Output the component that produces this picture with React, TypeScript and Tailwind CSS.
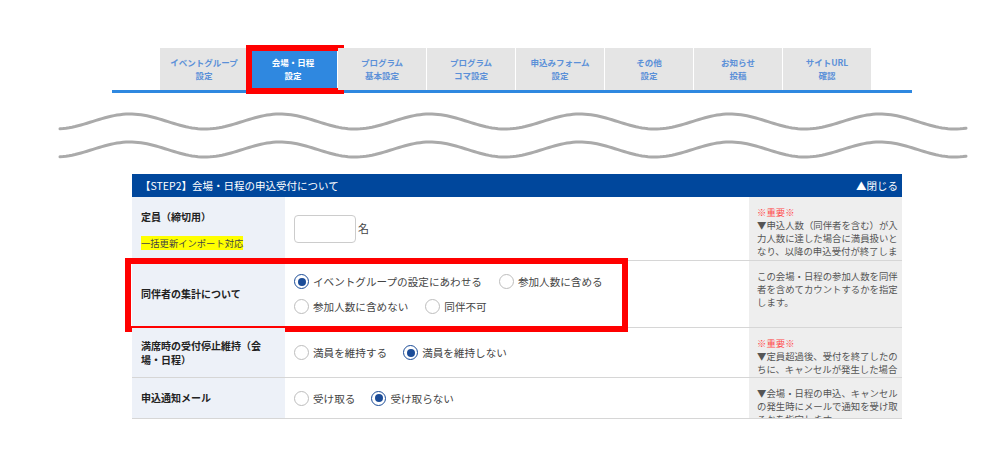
import type { ReactNode } from "react";

const TABS: { label: [string, string]; active?: boolean }[] = [
  { label: ["イベントグループ", "設定"] },
  { label: ["会場・日程", "設定"], active: true },
  { label: ["プログラム", "基本設定"] },
  { label: ["プログラム", "コマ設定"] },
  { label: ["申込みフォーム", "設定"] },
  { label: ["その他", "設定"] },
  { label: ["お知らせ", "投稿"] },
  { label: ["サイトURL", "確認"] },
];

const FONT = {
  fontFamily: '"Noto Sans CJK JP", "Noto Sans", sans-serif',
};

// sine wave path across the page
function wavePath(cy: number) {
  const pts: string[] = [];
  for (let x = 60; x <= 967; x += 3) {
    const y = cy - 7.5 * Math.cos((2 * Math.PI * (x - 130)) / 150);
    pts.push(`${x},${y.toFixed(2)}`);
  }
  return "M" + pts.join(" L");
}

function Radio({ checked, label }: { checked?: boolean; label: string }) {
  return (
    <label className="flex items-center gap-[4px]">
      {checked ? (
        <span className="w-[15px] h-[15px] rounded-full border-[1.5px] border-[#1b4c98] flex items-center justify-center bg-white">
          <span className="w-[8px] h-[8px] rounded-full bg-[#1b4c98]" />
        </span>
      ) : (
        <span className="w-[15px] h-[15px] rounded-full border-[1.5px] border-[#bdbdbd] bg-white" />
      )}
      <span className="text-[10.6px] text-[#444] leading-[15px]">{label}</span>
    </label>
  );
}

function Note({ lines, important }: { lines: string[]; important?: boolean }) {
  return (
    <div className="w-[153px] bg-[#eeeeee] pl-[8px] pt-[9px] overflow-hidden text-[9.4px] leading-[13px] text-[#555]">
      {important && <div className="text-[#ff4b4b] whitespace-nowrap">※重要※</div>}
      {lines.map((l, i) => (
        <div key={i} className="whitespace-nowrap">
          {l}
        </div>
      ))}
    </div>
  );
}

function Row({
  height,
  label,
  children,
  note,
  overlay,
}: {
  height: string;
  label: ReactNode;
  children: ReactNode;
  note: ReactNode;
  overlay?: boolean;
}) {
  return (
    <div className={`relative flex border-b border-[#d6d6d6] ${height}`}>
      <div className="w-[153px] bg-[#edf1f8] pl-[9px] pr-[16px] flex flex-col justify-center text-[10px] font-bold text-[#222] leading-[14px]">
        {label}
      </div>
      <div className="w-[464px] pl-[9px] flex flex-col justify-center">{children}</div>
      {note}
      {overlay && (
        <div className="absolute left-[-7px] top-[-3px] w-[503px] h-[74px] border-[6px] border-[#ff0000]" />
      )}
    </div>
  );
}

export default function App() {
  return (
    <div className="w-[1007px] h-[472px] bg-white overflow-hidden pt-[48px]" style={FONT}>
      {/* Tabs */}
      <div className="ml-[112px] w-[800px] border-b-[3px] border-[#2f88e0]">
        <div className="flex gap-px pl-[48px]">
          {TABS.map((t, i) => (
            <div
              key={i}
              className={`relative w-[88px] h-[42px] flex flex-col items-center justify-center text-[8.5px] font-bold leading-[13px] ${
                t.active ? "bg-[#2f88e0] text-white" : "bg-[#e5e5e5] text-[#5b90d8]"
              }`}
            >
              <span>{t.label[0]}</span>
              <span>{t.label[1]}</span>
              {t.active && (
                <div className="absolute left-[-3px] top-[-3px] w-[98px] h-[49px] border-[6px] border-[#ff0000]" />
              )}
            </div>
          ))}
        </div>
      </div>

      {/* Break marks */}
      <svg width="1007" height="81" viewBox="0 93 1007 81" className="block">
        <path d={wavePath(121.5)} fill="none" stroke="#aaaaaa" strokeWidth="3" strokeLinecap="round" />
        <path d={wavePath(149.5)} fill="none" stroke="#aaaaaa" strokeWidth="3" strokeLinecap="round" />
      </svg>

      {/* Table */}
      <div className="ml-[132px] w-[770px]">
        <div className="h-[23px] bg-[#00479c] flex items-center justify-between pl-[8px] pr-[4px] text-white text-[10.5px]">
          <span>【STEP2】会場・日程の申込受付について</span>
          <span>▲閉じる</span>
        </div>

        <Row
          height="h-[64px]"
          label={
            <div className="self-stretch pt-[2px]">
              <div>定員（締切用）</div>
              <div className="mt-[12px]">
                <span className="bg-[#ffff00] text-[9.3px] font-normal text-[#444] leading-[12px]">
                  一括更新インポート対応
                </span>
              </div>
            </div>
          }
          note={
            <Note
              important
              lines={[
                "▼申込人数（同伴者を含む）が入",
                "力人数に達した場合に満員扱いと",
                "なり、以降の申込受付が終了しま",
                "す。",
              ]}
            />
          }
        >
          <div className="flex items-center gap-[2px]">
            <div className="w-[62px] h-[28px] rounded-[4px] border border-[#cccccc] bg-white" />
            <span className="text-[11px] text-[#444]">名</span>
          </div>
        </Row>

        <Row
          height="h-[67px]"
          overlay
          label="同伴者の集計について"
          note={
            <Note
              lines={[
                "この会場・日程の参加人数を同伴",
                "者を含めてカウントするかを指定",
                "します。",
              ]}
            />
          }
        >
          <div className="flex flex-col gap-[10px]">
            <div className="flex gap-[17px]">
              <Radio checked label="イベントグループの設定にあわせる" />
              <Radio label="参加人数に含める" />
            </div>
            <div className="flex gap-[17px]">
              <Radio label="参加人数に含めない" />
              <Radio label="同伴不可" />
            </div>
          </div>
        </Row>

        <Row
          height="h-[50px]"
          label={
            <>
              <div>満席時の受付停止維持（会</div>
              <div>場・日程）</div>
            </>
          }
          note={
            <Note
              important
              lines={["▼定員超過後、受付を終了したの", "ちに、キャンセルが発生した場合", "も満員を維持します。"]}
            />
          }
        >
          <div className="flex gap-[16px]">
            <Radio label="満員を維持する" />
            <Radio checked label="満員を維持しない" />
          </div>
        </Row>

        <Row
          height="h-[41px]"
          label="申込通知メール"
          note={
            <Note
              lines={["▼会場・日程の申込、キャンセル", "の発生時にメールで通知を受け取", "るかを指定します。"]}
            />
          }
        >
          <div className="flex gap-[16px]">
            <Radio label="受け取る" />
            <Radio checked label="受け取らない" />
          </div>
        </Row>
      </div>
    </div>
  );
}
